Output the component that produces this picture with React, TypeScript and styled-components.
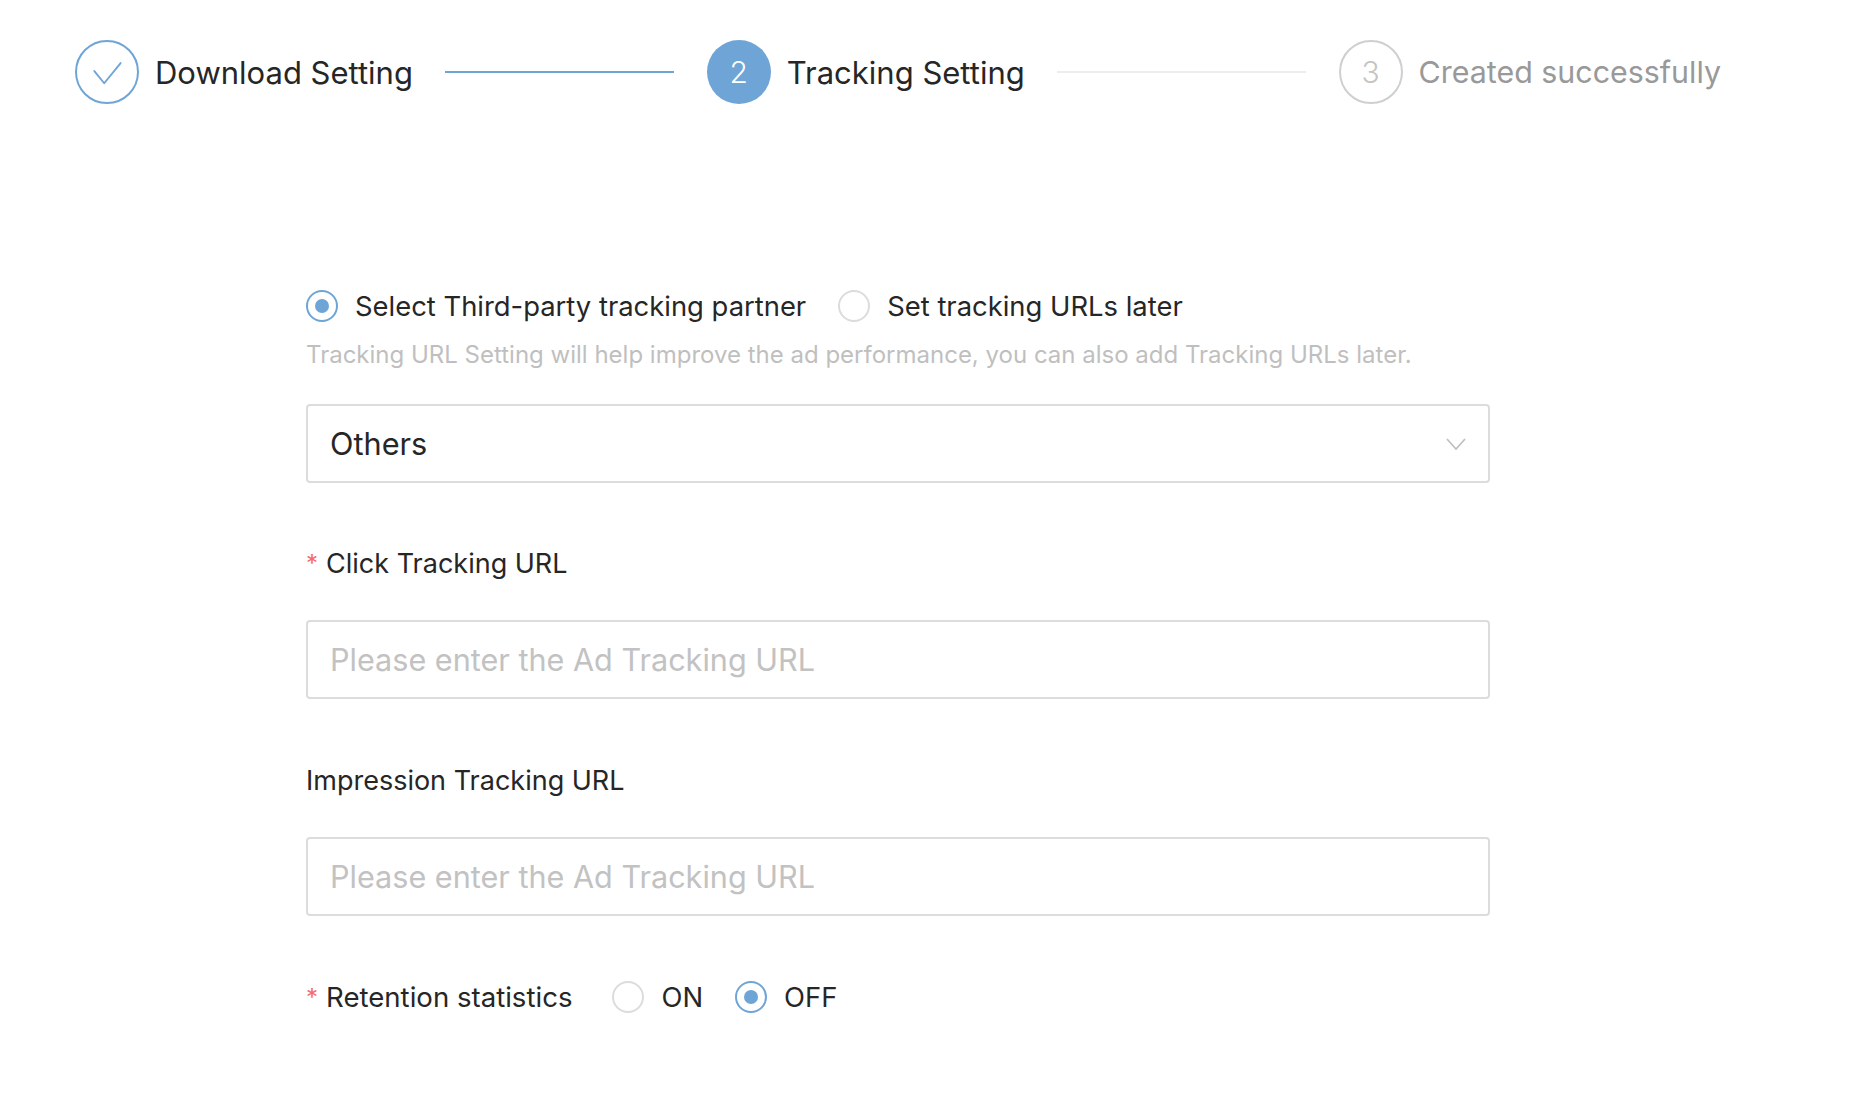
import React from "react";
import styled, { createGlobalStyle } from "styled-components";

const BLUE = "#6fa5d6";

const GlobalStyle = createGlobalStyle`
  html, body {
    margin: 0;
    padding: 0;
    background: #ffffff;
  }
  body {
    font-family: Inter, "Noto Sans", "Liberation Sans", sans-serif;
    color: #262626;
  }
`;

const Page = styled.div`
  width: 1858px;
  min-height: 1114px;
  box-sizing: border-box;
  padding-top: 40px;
`;

const Steps = styled.div`
  display: flex;
  align-items: center;
  width: 1646px;
  margin-left: 75px;
`;

const Step = styled.div<{ $last?: boolean }>`
  display: flex;
  align-items: center;
  flex: ${({ $last }) => ($last ? "none" : "1")};
`;

const StepIcon = styled.div<{ $status: "done" | "active" | "wait" }>`
  width: 64px;
  height: 64px;
  border-radius: 50%;
  box-sizing: border-box;
  display: flex;
  align-items: center;
  justify-content: center;
  flex: none;
  font-size: 30px;
  font-weight: 300;
  ${({ $status }) =>
    $status === "done"
      ? `border: 2px solid ${BLUE}; color: ${BLUE};`
      : $status === "active"
      ? `background: ${BLUE}; color: #fff;`
      : `border: 2px solid #cfcfcf; color: #c4c4c4;`}
`;

const StepTitle = styled.span<{ $wait?: boolean }>`
  margin-left: 16px;
  font-size: ${({ $wait }) => ($wait ? "30.4px" : "31px")};
  white-space: nowrap;
  color: ${({ $wait }) => ($wait ? "#999999" : "#262626")};
`;

const StepLine = styled.div<{ $done?: boolean }>`
  flex: 1;
  height: 2px;
  margin: 0 33px 0 32px;
  background: ${({ $done }) => ($done ? BLUE : "#ededed")};
`;

const Form = styled.div`
  display: flex;
  flex-direction: column;
  width: 1184px;
  margin: 182px 0 0 306px;
`;

const RadioRow = styled.div<{ $top?: number }>`
  display: flex;
  align-items: center;
  height: 40px;
  margin-top: ${({ $top }) => $top ?? 0}px;
`;

const RadioItem = styled.label<{ $gap?: number }>`
  display: inline-flex;
  align-items: center;
  gap: 17px;
  margin-right: ${({ $gap }) => $gap ?? 32}px;
  font-size: 27.4px;
  color: #262626;
  cursor: pointer;
`;

const RadioDot = styled.span<{ $checked?: boolean }>`
  width: 32px;
  height: 32px;
  border-radius: 50%;
  box-sizing: border-box;
  border: 2px solid ${({ $checked }) => ($checked ? BLUE : "#dcdcdc")};
  display: flex;
  align-items: center;
  justify-content: center;
  flex: none;

  &::after {
    content: "";
    width: 14px;
    height: 14px;
    border-radius: 50%;
    background: ${BLUE};
    display: ${({ $checked }) => ($checked ? "block" : "none")};
  }
`;

const Help = styled.div`
  margin-top: 11px;
  line-height: 36px;
  font-size: 24px;
  color: #bfbfbf;
  white-space: nowrap;
`;

const SelectBox = styled.div`
  margin-top: 31px;
  height: 79px;
  box-sizing: border-box;
  border: 2px solid #dcdcdc;
  border-radius: 4px;
  padding: 0 22px;
  display: flex;
  align-items: center;
  justify-content: space-between;
  font-size: 30.7px;
  color: #262626;
`;

const FieldLabel = styled.div<{ $top: number }>`
  display: flex;
  align-items: center;
  height: 40px;
  margin-top: ${({ $top }) => $top}px;
  font-size: 27px;
  color: #262626;
  white-space: nowrap;
`;

const Required = styled.span`
  color: #f56c6c;
  font-size: 24px;
  align-self: flex-start;
  margin: 6px 8px 0 0;
`;

const TextInput = styled.input<{ $top: number }>`
  margin-top: ${({ $top }) => $top}px;
  height: 79px;
  box-sizing: border-box;
  border: 2px solid #dcdcdc;
  border-radius: 4px;
  padding: 0 22px;
  font-family: inherit;
  font-size: 30.6px;
  color: #262626;
  outline: none;

  &::placeholder {
    color: #c2c2c2;
  }
`;

const RetentionLabel = styled.span`
  display: inline-flex;
  align-items: center;
  font-size: 27.6px;
  margin-right: 40px;
  height: 40px;
`;

const CheckIcon = () => (
  <svg width="64" height="64" viewBox="0 0 64 64" fill="none">
    <polyline
      points="18.5,31 29,44 46.5,22.5"
      stroke={BLUE}
      strokeWidth="2"
      strokeLinecap="round"
      strokeLinejoin="round"
    />
  </svg>
);

const Chevron = () => (
  <svg width="20" height="14" viewBox="0 0 20 14" fill="none">
    <polyline points="1,2 10,12 19,2" stroke="#bdbdbd" strokeWidth="1.6" />
  </svg>
);

export default function App() {
  return (
    <Page>
      <GlobalStyle />
      <Steps>
        <Step>
          <StepIcon $status="done">
            <CheckIcon />
          </StepIcon>
          <StepTitle>Download Setting</StepTitle>
          <StepLine $done />
        </Step>
        <Step>
          <StepIcon $status="active">2</StepIcon>
          <StepTitle>Tracking Setting</StepTitle>
          <StepLine />
        </Step>
        <Step $last>
          <StepIcon $status="wait">3</StepIcon>
          <StepTitle $wait>Created successfully</StepTitle>
        </Step>
      </Steps>

      <Form>
        <RadioRow>
          <RadioItem>
            <RadioDot $checked />
            Select Third-party tracking partner
          </RadioItem>
          <RadioItem>
            <RadioDot />
            Set tracking URLs later
          </RadioItem>
        </RadioRow>
        <Help>
          Tracking URL Setting will help improve the ad performance, you can also add Tracking URLs later.
        </Help>

        <SelectBox>
          <span>Others</span>
          <Chevron />
        </SelectBox>

        <FieldLabel $top={60}>
          <Required>*</Required>
          Click Tracking URL
        </FieldLabel>
        <TextInput $top={37} placeholder="Please enter the Ad Tracking URL" />

        <FieldLabel $top={61}>Impression Tracking URL</FieldLabel>
        <TextInput $top={37} placeholder="Please enter the Ad Tracking URL" />

        <RadioRow $top={61}>
          <RetentionLabel>
            <Required>*</Required>
            Retention statistics
          </RetentionLabel>
          <RadioItem $gap={32}>
            <RadioDot />
            ON
          </RadioItem>
          <RadioItem>
            <RadioDot $checked />
            OFF
          </RadioItem>
        </RadioRow>
      </Form>
    </Page>
  );
}
